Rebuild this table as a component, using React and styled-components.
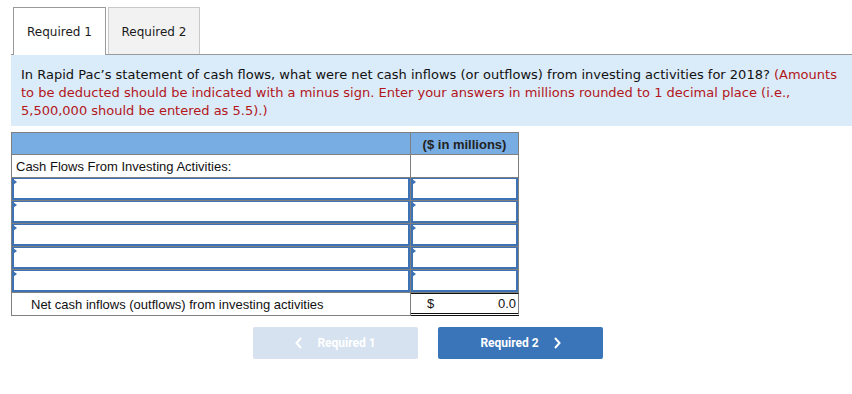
import React from 'react';
import styled, { createGlobalStyle } from 'styled-components';

const GlobalStyle = createGlobalStyle`
  body {
    margin: 0;
    background: #ffffff;
    font-family: "DejaVu Sans", Verdana, sans-serif;
  }
`;

const Page = styled.div`
  width: 852px;
  padding: 7px 0 0 11px;
  box-sizing: border-box;
`;

const TabBar = styled.div`
  display: flex;
  gap: 2px;
  padding-left: 2px;
  border-bottom: 1px solid #9a9a9a;
`;

const Tab = styled.div`
  width: ${(p) => (p.active ? 93 : 92)}px;
  height: ${(p) => (p.active ? 48 : 47)}px;
  box-sizing: border-box;
  display: flex;
  align-items: center;
  justify-content: center;
  padding-top: 1px;
  font-size: 12px;
  color: #1a1a1a;
  border: 1px solid ${(p) => (p.active ? '#9a9a9a' : '#c8c8c8')};
  border-bottom: none;
  background: ${(p) => (p.active ? '#ffffff' : '#f2f2f2')};
  margin-bottom: ${(p) => (p.active ? '-1px' : '0')};
`;

const Prompt = styled.div`
  background: #daebf9;
  padding: 11px 6px 6px 10px;
  font-size: 13px;
  line-height: 18px;
  color: #111;
`;

const Hint = styled.span`
  color: #b3161b;
`;

const Table = styled.div`
  margin-top: 6px;
  width: 507px;
  display: grid;
  grid-template-columns: 399px 108px;
  font-family: "Liberation Sans", Arial, sans-serif;
  font-size: 13px;
  color: #111;
  border-left: 1px solid #7f7f7f;
`;

const HeadCell = styled.div`
  height: 23px;
  box-sizing: border-box;
  background: #78ade3;
  border-top: 1px solid #7f7f7f;
  border-right: 1px solid #7f7f7f;
  border-bottom: 1px solid #7f7f7f;
  display: flex;
  align-items: center;
  justify-content: center;
  font-weight: bold;
  color: #222;
  padding-top: 1px;
`;

const Cell = styled.div`
  height: 23px;
  box-sizing: border-box;
  border-right: 1px solid #7f7f7f;
  border-bottom: 1px solid #7f7f7f;
  display: flex;
  align-items: center;
  padding-left: ${(p) => p.indent || 4}px;
`;

const InputCell = styled.div`
  position: relative;
  height: 23px;
  box-sizing: border-box;
  border-right: 1px solid #7f7f7f;
  border-bottom: 1px solid #7f7f7f;
  display: flex;
`;

const Field = styled.div`
  flex: 1;
  border: 2px solid #3d72b4;
  border-top-width: 1px;
  background: #ffffff;
`;

const Marker = styled.span`
  position: absolute;
  left: 1px;
  top: 1px;
  width: 0;
  height: 0;
  border-top: 3px solid transparent;
  border-bottom: 3px solid transparent;
  border-left: 4px solid #3d72b4;
`;

const TotalCell = styled.div`
  height: 23px;
  box-sizing: border-box;
  border-right: 1px solid #7f7f7f;
  border-bottom: 3px double #111;
  border-top: 1px solid #111;
  display: flex;
  align-items: center;
  justify-content: space-between;
  padding: 0 2px 0 16px;
`;

const Nav = styled.div`
  display: flex;
  gap: 20px;
  margin: 11px 0 0 242px;
`;

const NavButton = styled.div`
  width: 165px;
  height: 32px;
  border-radius: 2px;
  box-sizing: border-box;
  display: flex;
  align-items: center;
  justify-content: center;
  gap: 14px;
  font-family: "Roboto", "Liberation Sans", sans-serif;
  font-weight: bold;
  font-size: 12px;
  color: #ffffff;
  background: ${(p) => (p.disabled ? '#d6e2f0' : '#3a75ba')};
`;

const Chevron = ({ dir }) => (
  <svg width="8" height="12" viewBox="0 0 8 12">
    <path
      d={dir === 'left' ? 'M6 1 L1.5 6 L6 11' : 'M2 1 L6.5 6 L2 11'}
      fill="none"
      stroke="#ffffff"
      strokeWidth="2"
    />
  </svg>
);

const inputRows = [1, 2, 3, 4, 5];

const App = () => (
  <>
    <GlobalStyle />
    <Page>
      <TabBar>
        <Tab active>Required 1</Tab>
        <Tab>Required 2</Tab>
      </TabBar>
      <Prompt>
        In Rapid Pac’s statement of cash flows, what were net cash inflows (or outflows) from
        investing activities for 2018?{' '}
        <Hint>
          (Amounts to be deducted should be indicated with a minus sign. Enter your answers in
          millions rounded to 1 decimal place (i.e., 5,500,000 should be entered as 5.5).)
        </Hint>
      </Prompt>
      <Table>
        <HeadCell />
        <HeadCell>($ in millions)</HeadCell>
        <Cell>Cash Flows From Investing Activities:</Cell>
        <Cell />
        {inputRows.map((row) => (
          <React.Fragment key={row}>
            <InputCell>
              <Field />
              <Marker />
            </InputCell>
            <InputCell>
              <Field />
              <Marker />
            </InputCell>
          </React.Fragment>
        ))}
        <Cell indent={19}>Net cash inflows (outflows) from investing activities</Cell>
        <TotalCell>
          <span>$</span>
          <span>0.0</span>
        </TotalCell>
      </Table>
      <Nav>
        <NavButton disabled>
          <Chevron dir="left" />
          Required 1
        </NavButton>
        <NavButton>
          Required 2
          <Chevron dir="right" />
        </NavButton>
      </Nav>
    </Page>
  </>
);

export default App;
